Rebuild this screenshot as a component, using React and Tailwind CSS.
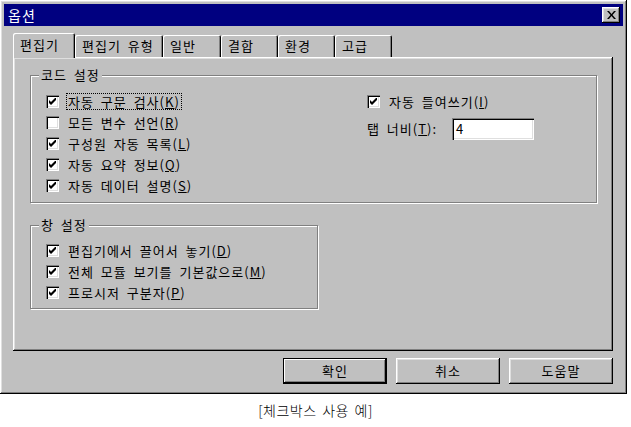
import React from "react";

const FONT = { fontFamily: '"Noto Sans CJK KR", "Noto Sans", sans-serif' };

// raised 3D edge used by the window, tabs and buttons
const RAISED =
  "shadow-[inset_-1px_-1px_0_#000,inset_1px_1px_0_#fff,inset_-2px_-2px_0_#808080,inset_2px_2px_0_#dfdfdf]";
const SUNKEN =
  "shadow-[inset_1px_1px_0_#808080,inset_2px_2px_0_#000,inset_-1px_-1px_0_#fff,inset_-2px_-2px_0_#dfdfdf]";

function CheckBox({ checked }) {
  return (
    <span className={`w-[13px] h-[13px] bg-white flex items-center justify-center shrink-0 ${SUNKEN}`}>
      {checked && (
        <svg width="7" height="7" viewBox="0 0 7 7">
          <path d="M0 2 L0 5 L2 7 L7 2 L7 -1 L2 4 Z" fill="#000" />
        </svg>
      )}
    </span>
  );
}

function Row({ checked = true, label, mnemonic, focused }) {
  return (
    <div className="h-[21px] flex items-center gap-[7px]">
      <CheckBox checked={checked} />
      <span
        className={`leading-[15px] px-[1px] ${focused ? "border border-dotted border-black" : "border border-transparent"}`}
      >
        {label}(<u>{mnemonic}</u>)
      </span>
    </div>
  );
}

function Group({ title, className, children }) {
  return (
    <div
      className={`relative border border-[#808080] shadow-[inset_1px_1px_0_#fff,1px_1px_0_#fff] ${className}`}
    >
      <span className="absolute -top-[10px] left-[8px] px-[2px] bg-[#c0c0c0] leading-[18px]">{title}</span>
      {children}
    </div>
  );
}

const TABS = [
  { label: "편집기", w: "w-[62px]" },
  { label: "편집기 유형", w: "w-[88px]" },
  { label: "일반", w: "w-[58px]" },
  { label: "결합", w: "w-[57px]" },
  { label: "환경", w: "w-[57px]" },
  { label: "고급", w: "w-[57px]" },
];

export default function App() {
  return (
    <div className="w-[631px] h-[427px] bg-white text-[13px] text-black" style={FONT}>
      <div
        className={`w-[627px] h-[394px] bg-[#c0c0c0] p-[4px] flex flex-col tracking-[1px] [word-spacing:3px] ${RAISED}`}
      >
        {/* Title bar */}
        <div className="h-[22px] bg-[#000080] flex items-center justify-between pl-[4px] pr-[3px]">
          <span className="text-white text-[14px]">옵션</span>
          <button className={`w-[18px] h-[16px] bg-[#c0c0c0] flex items-center justify-center ${RAISED}`}>
            <svg width="9" height="8" viewBox="0 0 9 8">
              <path d="M0 0 L2 0 L4.5 3 L7 0 L9 0 L5.5 4 L9 8 L7 8 L4.5 5 L2 8 L0 8 L3.5 4 Z" fill="#000" />
            </svg>
          </button>
        </div>

        <div className="px-[9px] mt-[7px] flex flex-col">
          {/* Tabs */}
          <div className="h-[24px] flex items-end">
            {TABS.map((t, i) => (
              <div
                key={t.label}
                className={`${t.w} ${
                  i === 0
                    ? "h-[25px] -mb-[1px] z-10 pb-[2px] shadow-[inset_1px_1px_0_#fff,inset_-1px_0_0_#000,inset_-2px_0_0_#808080]"
                    : "h-[22px] shadow-[inset_1px_1px_0_#fff,inset_-1px_0_0_#000,inset_-2px_0_0_#808080]"
                } bg-[#c0c0c0] rounded-t-[2px] flex items-center pl-[7px]`}
              >
                {t.label}
              </div>
            ))}
          </div>

          {/* Panel */}
          <div className={`h-[294px] w-[600px] pt-[18px] pl-[17px] flex flex-col ${RAISED}`}>
            <Group title="코드 설정" className="w-[567px] h-[128px] flex">
              <div className="w-[320px] pl-[15px] pt-[15px] flex flex-col">
                <Row label="자동 구문 검사" mnemonic="K" focused />
                <Row label="모든 변수 선언" mnemonic="R" checked={false} />
                <Row label="구성원 자동 목록" mnemonic="L" />
                <Row label="자동 요약 정보" mnemonic="Q" />
                <Row label="자동 데이터 설명" mnemonic="S" />
              </div>
              <div className="pl-[16px] pt-[15px] flex flex-col">
                <Row label="자동 들여쓰기" mnemonic="I" />
                <div className="mt-[6px] flex items-center">
                  <span className="w-[85px]">
                    탭 너비(<u>T</u>):
                  </span>
                  <div className={`w-[82px] h-[22px] bg-white flex items-center pl-[4px] ${SUNKEN}`}>4</div>
                </div>
              </div>
            </Group>

            <Group title="창 설정" className="mt-[22px] w-[288px] h-[84px]">
              <div className="pl-[15px] pt-[14px] flex flex-col">
                <Row label="편집기에서 끌어서 놓기" mnemonic="D" />
                <Row label="전체 모듈 보기를 기본값으로" mnemonic="M" />
                <Row label="프로시저 구분자" mnemonic="P" />
              </div>
            </Group>
          </div>

          {/* Buttons */}
          <div className="mt-[7px] w-[600px] flex justify-end gap-[9px]">
            <button className="w-[104px] h-[26px] bg-[#c0c0c0] flex items-center justify-center border border-black shadow-[inset_-1px_-1px_0_#000,inset_1px_1px_0_#fff,inset_-2px_-2px_0_#808080]">
              확인
            </button>
            <button className={`w-[104px] h-[26px] bg-[#c0c0c0] flex items-center justify-center ${RAISED}`}>
              취소
            </button>
            <button className={`w-[104px] h-[26px] bg-[#c0c0c0] flex items-center justify-center ${RAISED}`}>
              도움말
            </button>
          </div>
        </div>
      </div>

      {/* Caption */}
      <div className="mt-[6px] text-center text-[14px] font-light tracking-[0.5px] [word-spacing:2px]">
        [체크박스 사용 예]
      </div>
    </div>
  );
}
